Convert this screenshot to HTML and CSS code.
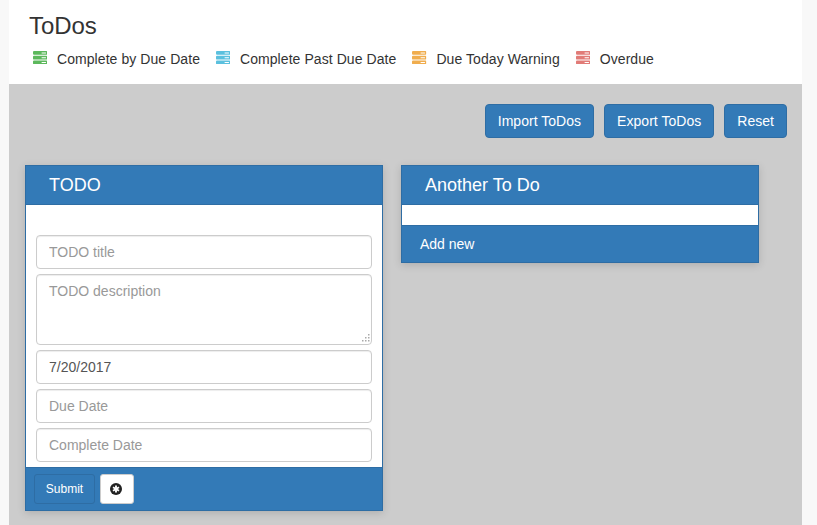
FILE: index.html
```html
<!DOCTYPE html>
<html lang="en">
<head>
  <meta charset="UTF-8" />
  <meta name="viewport" content="width=device-width,initial-scale=1" />
  <title>ToDos</title>
  <link rel="stylesheet" href="styles.css">
</head>
<body>
  <svg class="icon-defs" width="0" height="0" aria-hidden="true">
    <symbol id="server" viewBox="0 0 15 14">
      <path fill-rule="evenodd" d="M1 0h13a1 1 0 0 1 1 1v2a1 1 0 0 1-1 1H1a1 1 0 0 1-1-1V1a1 1 0 0 1 1-1zM9 1.500v1h4.500v-1zM1 5h13a1 1 0 0 1 1 1v2a1 1 0 0 1-1 1H1a1 1 0 0 1-1-1V6a1 1 0 0 1 1-1zM9 6.500v1h4.500v-1zM1 10h13a1 1 0 0 1 1 1v2a1 1 0 0 1-1 1H1a1 1 0 0 1-1-1v-2a1 1 0 0 1 1-1zM9 11.500v1h4.500v-1z"/>
    </symbol>
  </svg>

  <div class="page">
    <header class="top">
      <h1>ToDos</h1>
      <ul class="legend">
        <li><svg class="legend-icon green"><use href="#server"/></svg>Complete by Due Date</li>
        <li><svg class="legend-icon blue"><use href="#server"/></svg>Complete Past Due Date</li>
        <li><svg class="legend-icon orange"><use href="#server"/></svg>Due Today Warning</li>
        <li><svg class="legend-icon red"><use href="#server"/></svg>Overdue</li>
      </ul>
    </header>

    <main class="board">
      <div class="actions">
        <button type="button" class="btn">Import ToDos</button>
        <button type="button" class="btn">Export ToDos</button>
        <button type="button" class="btn">Reset</button>
      </div>

      <div class="lists">
        <section class="list">
          <h2 class="list-title">TODO</h2>
          <form class="todo-form">
            <input type="text" class="field" placeholder="TODO title" />
            <div class="area-wrap">
              <textarea class="field field-area" placeholder="TODO description"></textarea>
              <svg class="grip" viewBox="0 0 9 9" aria-hidden="true">
                <path d="M7 0h1.500v1.500H7zM7 3h1.500v1.500H7zM4 3h1.500v1.500H4zM7 6h1.500v1.500H7zM4 6h1.500v1.500H4zM1 6h1.500v1.500H1z"/>
              </svg>
            </div>
            <input type="text" class="field" value="7/20/2017" />
            <input type="text" class="field" placeholder="Due Date" />
            <input type="text" class="field" placeholder="Complete Date" />
          </form>
          <div class="list-footer form-footer">
            <button type="button" class="btn btn-sm">Submit</button>
            <button type="button" class="btn btn-sm btn-white" aria-label="Cancel">
              <svg class="cancel-icon" viewBox="0 0 12 12">
                <circle cx="6" cy="6" r="6" fill="#222"/>
                <g stroke="#fff" stroke-width="1.900" fill="none">
                  <path d="M6 2.500v7"/>
                  <path d="M3 4.250l6 3.500"/>
                  <path d="M9 4.250l-6 3.500"/>
                </g>
              </svg>
            </button>
          </div>
        </section>

        <section class="list">
          <h2 class="list-title">Another To Do</h2>
          <div class="list-body"></div>
          <div class="list-footer add-new">Add new</div>
        </section>
      </div>
    </main>
  </div>
</body>
</html>
```

FILE: styles.css
```css
* {
  box-sizing: border-box;
}
html, body {
  height: 100%;
}
body {
  margin: 0;
  background: #f8f8f8;
  color: #333;
  font-family: "Liberation Sans", Arial, sans-serif;
  font-size: 14px;
  line-height: 20px;
  overflow: hidden;
}
.icon-defs {
  display: block;
  height: 0;
}
.page {
  margin: 0 15px 0 9px;
  height: 100%;
  display: flex;
  flex-direction: column;
}
.top {
  background: white;
  height: 84px;
  padding: 13px 20px 0;
}
.top h1 {
  margin: 0;
  font-size: 24px;
  font-weight: normal;
  line-height: 26px;
  letter-spacing: -0.1px;
}
.legend {
  list-style: none;
  margin: 10px 0 0;
  padding: 0 0 0 4px;
  display: flex;
  gap: 16px;
  letter-spacing: 0.07px;
}
.legend li {
  display: flex;
  align-items: center;
}
.legend-icon {
  width: 14.400px;
  height: 13.400px;
  margin-right: 9.600px;
  margin-top: -3px;
}
.green { fill: #5cb85c; }
.blue { fill: #5bc0de; }
.orange { fill: #f0ad4e; }
.red { fill: #e17b77; }

.board {
  flex: 1;
  background: #ccc;
  padding: 20px 15px 0 16px;
}
.actions {
  display: flex;
  justify-content: flex-end;
  gap: 10px;
}
.btn {
  height: 34px;
  padding: 0 12px;
  background: #337ab7;
  border: 1px solid #2e6da4;
  border-radius: 4px;
  color: white;
  font: inherit;
  letter-spacing: 0.03px;
  cursor: pointer;
}
.btn-sm {
  height: 30px;
  font-size: 12px;
  border-radius: 3px;
  padding: 0 10.700px;
}
.btn-white {
  width: 34px;
  padding: 0;
  background: white;
  border-color: #ccc;
  display: flex;
  align-items: center;
  justify-content: center;
}
.cancel-icon {
  width: 12px;
  height: 12px;
  margin-top: -1px;
  margin-left: -1px;
}
.lists {
  display: flex;
  align-items: flex-start;
  gap: 18px;
  margin-top: 27px;
}
.list {
  width: 358px;
  background: white;
  border: 1px solid #2e6da4;
  box-shadow: 0 2px 8px rgba(0,0,0,0.15);
}
.list-title {
  margin: 0;
  height: 39px;
  padding-left: 23px;
  background: #337ab7;
  border-bottom: 1px solid #2e6da4;
  color: white;
  font-size: 18px;
  font-weight: normal;
  line-height: 38px;
}
.list-body {
  height: 20px;
}
.list-footer {
  background: #337ab7;
  border-top: 1px solid #2e6da4;
  color: white;
}
.todo-form {
  display: flex;
  flex-direction: column;
  gap: 5px;
  padding: 30px 10px 5px;
}
.field {
  display: block;
  width: 100%;
  height: 34px;
  padding: 6px 12px;
  border: 1px solid #ccc;
  border-radius: 4px;
  box-shadow: inset 0 1px 1px rgba(0,0,0,0.075);
  color: #555;
  font: inherit;
  outline: none;
}
.field::placeholder {
  color: #999;
  opacity: 1;
}
.area-wrap {
  position: relative;
}
.field-area {
  height: 71px;
  resize: none;
}
.grip {
  position: absolute;
  right: 2px;
  bottom: 2px;
  width: 9px;
  height: 9px;
  fill: #aaa;
}
.form-footer {
  display: flex;
  gap: 5px;
  height: 43px;
  padding: 6px 8px;
}
.add-new {
  height: 37px;
  padding: 8px 18px;
}
```
